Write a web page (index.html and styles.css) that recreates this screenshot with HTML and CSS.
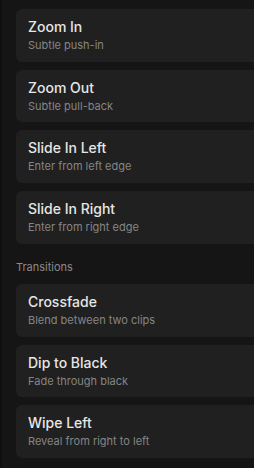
FILE: index.html
```html
<!DOCTYPE html>
<html>
<head>
<meta charset="utf-8">
<link rel="stylesheet" href="styles.css">
</head>
<body>
<div class="panel">
  <div class="list">
    <div class="card"><div class="title">Zoom In</div><div class="sub">Subtle push-in</div></div>
    <div class="card"><div class="title">Zoom Out</div><div class="sub">Subtle pull-back</div></div>
    <div class="card"><div class="title">Slide In Left</div><div class="sub">Enter from left edge</div></div>
    <div class="card"><div class="title">Slide In Right</div><div class="sub">Enter from right edge</div></div>
    <div class="section">Transitions</div>
    <div class="card"><div class="title">Crossfade</div><div class="sub">Blend between two clips</div></div>
    <div class="card"><div class="title">Dip to Black</div><div class="sub">Fade through black</div></div>
    <div class="card"><div class="title">Wipe Left</div><div class="sub">Reveal from right to left</div></div>
  </div>
</div>
</body>
</html>
```
FILE: styles.css
```css
html, body {
  margin: 0;
  padding: 0;
  background: #151515;
  height: 100%;
  overflow: hidden;
}
body {
  font-family: Inter, "Noto Sans", sans-serif;
}
.panel {
  border-left: 2px solid #0f0f0f;
  padding: 9px 0 0 14px;
  height: 100%;
  box-sizing: border-box;
}
.list {
  display: flex;
  flex-direction: column;
  gap: 8px;
}
.card {
  background: #202020;
  border-radius: 6px 0 0 6px;
  padding: 8px 12px 8.7px;
  box-sizing: border-box;
}
.title {
  font-size: 14px;
  line-height: 20px;
  font-weight: 500;
  color: #e6e6e6;
}
.sub {
  font-size: 11px;
  line-height: 16px;
  color: #858585;
}
.section {
  font-size: 11px;
  line-height: 16px;
  color: #8a8a8a;
  padding-top: 7.5px;
  margin-bottom: 0.7px;
}
```
